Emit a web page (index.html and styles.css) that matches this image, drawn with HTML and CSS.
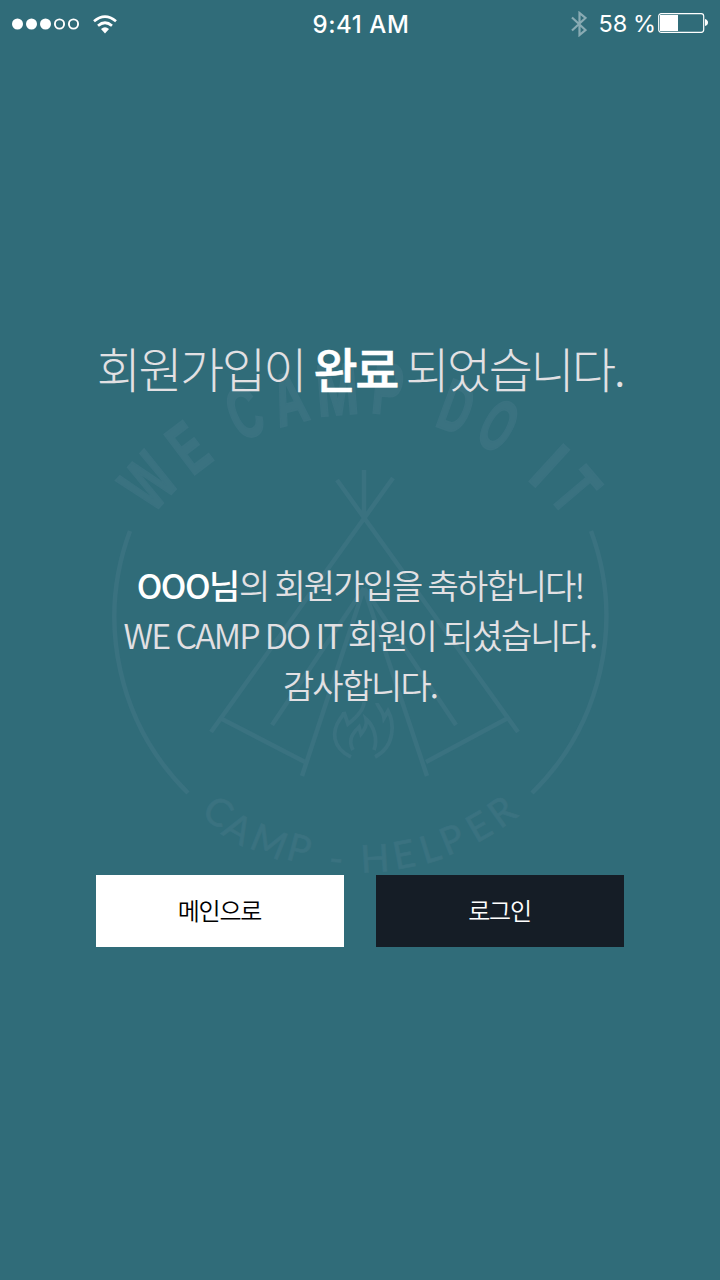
FILE: index.html
```html
<!DOCTYPE html>
<html lang="ko">
<head>
<meta charset="utf-8">
<title>WE CAMP DO IT</title>
<link rel="stylesheet" href="styles.css">
</head>
<body>
<div class="screen">
  <svg class="emblem" viewBox="0 0 720 1280" aria-hidden="true">
    <g class="emblem-lines">
      <path d="M130 531A247 247 0 0 0 188 793M591 531A247 247 0 0 1 532 793"/>
      <path d="M364 470V516M337 480L518 732M393 478L211 732"/>
      <path d="M220 718L305 762M508 718L426 762"/>
      <path d="M364 588L302 776M364 588L427 776M364 588L272 725M364 588L456 725"/>
      <path class="flame" d="M351 757C331 747 332 731 340 719Q344 714 344 712L348 724C357 717 364 710 364 702M375 757C396 746 394 722 388 711L384 718C383 710 377 706 377 703"/>
      <path class="flame" d="M353 750C347 739 354 732 359 727L361 734C366 728 367 723 366 719C374 726 378 739 374 750"/>
    </g>
    <g class="arc-top">
      <text transform="translate(148 481) rotate(-47.8)" y="26" textLength="43" lengthAdjust="spacingAndGlyphs">W</text>
      <text transform="translate(188 447) rotate(-37)" y="26" textLength="29" lengthAdjust="spacingAndGlyphs">E</text>
      <text transform="translate(244 412) rotate(-24)" y="26" textLength="31" lengthAdjust="spacingAndGlyphs">C</text>
      <text transform="translate(289 398) rotate(-14.4)" y="26" textLength="33" lengthAdjust="spacingAndGlyphs">A</text>
      <text transform="translate(337 389) rotate(-4.6)" y="26" textLength="42" lengthAdjust="spacingAndGlyphs">M</text>
      <text transform="translate(388 388) rotate(5.4)" y="26" textLength="31" lengthAdjust="spacingAndGlyphs">P</text>
      <text transform="translate(457 406) rotate(20)" y="26" textLength="31" lengthAdjust="spacingAndGlyphs">D</text>
      <text transform="translate(499 425) rotate(29.3)" y="26" textLength="31" lengthAdjust="spacingAndGlyphs">O</text>
      <text transform="translate(550 465) rotate(42.4)" y="26" textLength="16" lengthAdjust="spacingAndGlyphs">I</text>
      <text transform="translate(576 490) rotate(49.6)" y="26" textLength="28" lengthAdjust="spacingAndGlyphs">T</text>
    </g>
    <g class="arc-bottom">
      <text transform="translate(218 812) rotate(36)" y="13">C</text>
      <text transform="translate(238 829) rotate(30)" y="13">A</text>
      <text transform="translate(269 842) rotate(22)" y="13">M</text>
      <text transform="translate(299 849) rotate(14.7)" y="13">P</text>
      <text transform="translate(336 861) rotate(5.6)" y="11">-</text>
      <text transform="translate(375 859) rotate(-3.5)" y="13">H</text>
      <text transform="translate(404 855) rotate(-10.5)" y="13">E</text>
      <text transform="translate(430 849) rotate(-17)" y="13">L</text>
      <text transform="translate(452 840) rotate(-22.4)" y="13">P</text>
      <text transform="translate(479 827) rotate(-30)" y="13">E</text>
      <text transform="translate(502 812) rotate(-35.7)" y="13">R</text>
    </g>
  </svg>

  <header class="status">
    <div class="status-left">
      <svg class="signal" viewBox="0 0 68 12"><g fill="#fff"><circle cx="5.5" cy="6" r="5.5"/><circle cx="19.5" cy="6" r="5.5"/><circle cx="33.5" cy="6" r="5.5"/></g><g fill="none" stroke="#fff" stroke-width="1.9"><circle cx="47.5" cy="6" r="4.6"/><circle cx="61.5" cy="6" r="4.6"/></g></svg>
      <svg class="wifi" viewBox="0 0 24 19"><path d="M1 6.2Q12-3 23 6.2M5 10.7Q12 4.8 19 10.7" fill="none" stroke="#fff" stroke-width="2.7"/><path d="M8 14Q12 10.3 16 14L12 18.4Z" fill="#fff"/></svg>
    </div>
    <div class="clock">9:41 AM</div>
    <div class="status-right">
      <svg class="bluetooth" viewBox="0 0 16 26"><path d="M1 6.5L14.5 19L8.500 24V2L14.5 7L1 19.5" fill="none" stroke="#89abb3" stroke-width="2.2"/></svg>
      <span class="percent">58 %</span>
      <svg class="battery" viewBox="0 0 50 20"><rect x=".7" y=".7" width="45" height="18.6" rx="2.5" fill="none" stroke="#fff" stroke-width="1.2"/><path d="M2 2H20V18H2Z" fill="#fff"/><path d="M47 6Q50 7 50 9.500Q50 12 47 13Z" fill="#fff"/></svg>
    </div>
  </header>

  <main class="content">
    <h1 class="title">회원가입이 <strong>완료</strong> 되었습니다.</h1>
    <p class="message"><strong>OOO님</strong>의 회원가입을 축하합니다!<br>WE CAMP DO IT 회원이 되셨습니다.<br>감사합니다.</p>
    <div class="actions">
      <button class="btn btn-main">메인으로</button>
      <button class="btn btn-login">로그인</button>
    </div>
  </main>
</div>
</body>
</html>
```
FILE: styles.css
```css
* { box-sizing: border-box; }
body { margin: 0; background: #306c79; font-family: "Noto Sans CJK KR", "Noto Sans", sans-serif; }
.screen { position: relative; width: 720px; height: 1280px; overflow: hidden; }
.emblem { position: absolute; inset: 0; width: 720px; height: 1280px; }
.emblem-lines { fill: none; stroke: #3a7280; stroke-width: 4.5; }
.emblem-lines .flame { stroke-width: 3.8; }
.arc-top, .arc-bottom { fill: #3a7280; stroke: #3a7280; text-anchor: middle; }
.arc-top { font: bold 73px "Liberation Sans", sans-serif; stroke-width: 2; }
.arc-bottom { font: 400 38px Lato, sans-serif; stroke-width: 0.7; }

.status { position: relative; display: grid; grid-template-columns: 1fr auto 1fr; align-items: center; height: 48px; padding: 0 12px; color: #fff; font-family: Inter, sans-serif; font-size: 24px; }
.status-left { display: flex; align-items: center; gap: 13px; }
.signal { width: 68px; height: 12px; }
.wifi { width: 24px; height: 19px; }
.clock { padding-left: 2px; font-weight: 500; letter-spacing: 0.6px; }
.status-right { display: flex; align-items: center; justify-content: flex-end; margin-top: -2px; }
.bluetooth { width: 16px; height: 26px; margin: 2px 11px 0 0; }
.percent { font-size: 23.5px; letter-spacing: 0; word-spacing: -1px; margin-right: 2px; }
.battery { width: 50px; height: 20px; }

.content { position: relative; padding: 283px 96px 0; }
.title { margin: 0; font-size: 48px; font-weight: 300; line-height: 72px; letter-spacing: -2.5px; word-spacing: -2.4px; color: #e2e0e3; text-align: center; white-space: nowrap; }
.title strong { font-weight: 500; color: #fff; -webkit-text-stroke: 0.5px #fff; }
.message { margin: 157px -20px 0; font-size: 34px; font-weight: 350; line-height: 50px; letter-spacing: -1.9px; word-spacing: -1.4px; color: #e2e0e3; text-align: center; white-space: nowrap; }
.message strong { font-weight: 500; letter-spacing: -1.5px; color: #fff; }
.actions { display: flex; gap: 32px; margin-top: 165px; }
.btn { flex: 1; height: 72px; padding: 0 1px 3px 0; border: 0; font-family: inherit; font-size: 24px; font-weight: 350; letter-spacing: -1.2px; }
.btn-main { background: #fff; color: #000; }
.btn-login { background: #151d26; color: #fff; }
```
